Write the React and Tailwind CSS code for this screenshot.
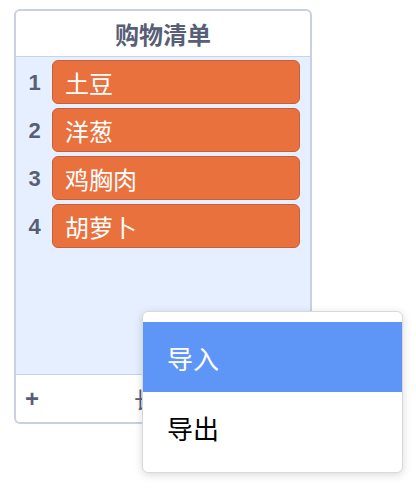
import React from "react";

const items = ["土豆", "洋葱", "鸡胸肉", "胡萝卜"];

export default function App() {
  return (
    <div className="relative w-[416px] h-[488px] bg-white overflow-hidden">
      <div className="ml-[14px] mt-[9px] w-[298px] h-[415px] border-2 border-[#c9d0df] rounded-[6px] bg-white flex flex-col overflow-hidden">
        <div className="h-[46px] flex items-center justify-center text-[24px] font-bold text-[#575e75] border-b border-[#c4d3ef] font-['Noto_Sans_CJK_SC',sans-serif]">
          购物清单
        </div>
        <div className="h-[317px] bg-[#e5efff] pt-[3px] flex flex-col gap-[4px]">
          {items.map((t, i) => (
            <div key={t} className="flex items-center h-[44px]">
              <div className="w-[36px] pl-[1px] text-center text-[22px] font-bold text-[#575e75] font-['Liberation_Sans',Arial,sans-serif]">
                {i + 1}
              </div>
              <div className="w-[248px] h-[44px] bg-[#e9713e] border border-[#c95f36] rounded-[6px] flex items-center pl-[12px] pt-[1px] text-white text-[24px] font-['Noto_Sans_CJK_SC',sans-serif]">
                {t}
              </div>
            </div>
          ))}
        </div>
        <div className="flex-1 border-t border-[#c4d3ef] flex items-center">
          <span className="pl-[9px] text-[24px] leading-none font-bold text-[#575e75] font-['Liberation_Sans',Arial,sans-serif]">
            +
          </span>
          <span className="ml-[95px] text-[22px] text-[#575e75] font-['Noto_Sans_CJK_SC',sans-serif]">
            长度 4
          </span>
        </div>
      </div>

      <div className="absolute left-[142px] top-[311px] w-[261px] h-[162px] bg-white border border-[#d9d9d9] rounded-[6px] shadow-[0_2px_8px_rgba(0,0,0,0.15)] py-[10px] overflow-hidden font-['Noto_Sans_CJK_SC',sans-serif]">
        <div className="h-[70px] bg-[#5e96f8] text-white text-[26px] flex items-center pl-[24px]">
          导入
        </div>
        <div className="h-[70px] text-black text-[26px] flex items-center pl-[24px]">
          导出
        </div>
      </div>
    </div>
  );
}
